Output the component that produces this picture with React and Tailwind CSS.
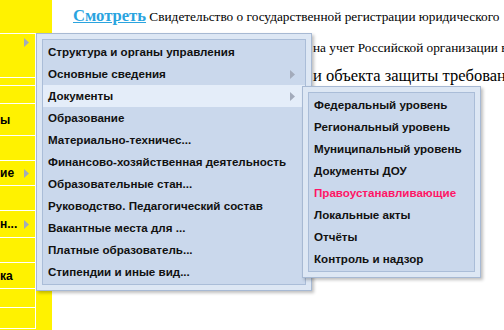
import React from "react";

const mainItems = [
  { t: "Структура и органы управления" },
  { t: "Основные сведения", arrow: true },
  { t: "Документы", arrow: true, active: true },
  { t: "Образование" },
  { t: "Материально-техничес..." },
  { t: "Финансово-хозяйственная деятельность" },
  { t: "Образовательные стан..." },
  { t: "Руководство. Педагогический состав" },
  { t: "Вакантные места для ..." },
  { t: "Платные образователь..." },
  { t: "Стипендии и иные вид..." },
];

const subItems = [
  { t: "Федеральный уровень" },
  { t: "Региональный уровень" },
  { t: "Муниципальный уровень" },
  { t: "Документы ДОУ" },
  { t: "Правоустанавливающие", pink: true },
  { t: "Локальные акты" },
  { t: "Отчёты" },
  { t: "Контроль и надзор" },
];

function Arrow({ className = "" }) {
  return (
    <svg width="5" height="9" viewBox="0 0 5 9" className={"shrink-0 " + className}>
      <path d="M0 0 L5 4.5 L0 9 Z" fill="#a3abbb" />
    </svg>
  );
}

const sideRows = [
  { h: "h-[44px]", arrow: true, top: true },
  { h: "h-[8px]" },
  { h: "h-[18px]" },
  { h: "h-[32px]", text: "ы" },
  { h: "h-[25px]" },
  { h: "h-[25px]", text: "ие", arrow: true },
  { h: "h-[25px]" },
  { h: "h-[27px]", text: "н...", arrow: true },
  { h: "h-[25px]" },
  { h: "h-[26px]", text: "ка" },
  { h: "h-[19px]" },
  { h: "h-[21px]" },
];

export default function App() {
  const menuFont = { fontFamily: '"Liberation Sans", Arial, sans-serif' };
  return (
    <div className="relative w-[504px] h-[330px] overflow-hidden bg-white flex">
      {/* Yellow sidebar */}
      <div className="w-[52px] h-full bg-[#fff200] pt-[33px] shrink-0">
        <div className="w-[36px] flex flex-col border-t border-white" style={menuFont}>
          {sideRows.map((r, i) => (
            <div
              key={i}
              className={
                r.h +
                " border-b border-r border-white flex justify-between pr-[6px] text-[12px] font-bold text-black " +
                (r.top ? "items-start pt-[4px]" : "items-center")
              }
            >
              <span className="leading-none">{r.text || ""}</span>
              {r.arrow && <Arrow />}
            </div>
          ))}
        </div>
      </div>

      {/* Content text */}
      <div className="flex-1 pl-[21px] pt-[5px]" style={{ fontFamily: '"Liberation Serif", "Times New Roman", serif' }}>
        <div className="whitespace-nowrap leading-[21px]">
          <span className="text-[16.6px] font-bold text-[#2aa4df] underline">Смотреть</span>
          <span className="text-[13.3px] text-black"> Свидетельство о государственной регистрации юридического</span>
        </div>
        <div className="whitespace-nowrap text-[13.3px] text-black pl-[240px] mt-[13px] leading-[16px]">
          на учет Российской организации в
        </div>
        <div className="whitespace-nowrap text-[16.5px] text-black pl-[240px] mt-[10px] leading-[20px]">
          и объекта защиты требования
        </div>
      </div>

      {/* Main dropdown menu */}
      <div
        className="absolute left-[36px] top-[33px] w-[276px] border border-[#a7b9d3] bg-[#dde7f4] p-[5px] shadow-[2px_2px_3px_rgba(0,0,0,0.25)]"
        style={menuFont}
      >
        <div className="border border-[#aabdd8] bg-[#cad8ec] py-[1px]">
          {mainItems.map((it, i) => (
            <div
              key={i}
              className={
                "h-[22px] flex items-center justify-between pl-[5px] pr-[10px] text-[11.6px] font-bold whitespace-nowrap text-[#111] " +
                (it.active ? "bg-[#e4edf9]" : "")
              }
            >
              <span>{it.t}</span>
              {it.arrow && <Arrow />}
            </div>
          ))}
        </div>
      </div>

      {/* Submenu */}
      <div
        className="absolute left-[302px] top-[86px] w-[179px] border border-[#a7b9d3] bg-[#dde7f4] p-[5px] shadow-[2px_2px_3px_rgba(0,0,0,0.25)]"
        style={menuFont}
      >
        <div className="border border-[#aabdd8] bg-[#cad8ec] py-[1px]">
          {subItems.map((it, i) => (
            <div
              key={i}
              className={
                "h-[22px] flex items-center pl-[5px] text-[11.6px] font-bold whitespace-nowrap " +
                (it.pink ? "text-[#ff1566]" : "text-[#111]")
              }
            >
              {it.t}
            </div>
          ))}
        </div>
      </div>
    </div>
  );
}
